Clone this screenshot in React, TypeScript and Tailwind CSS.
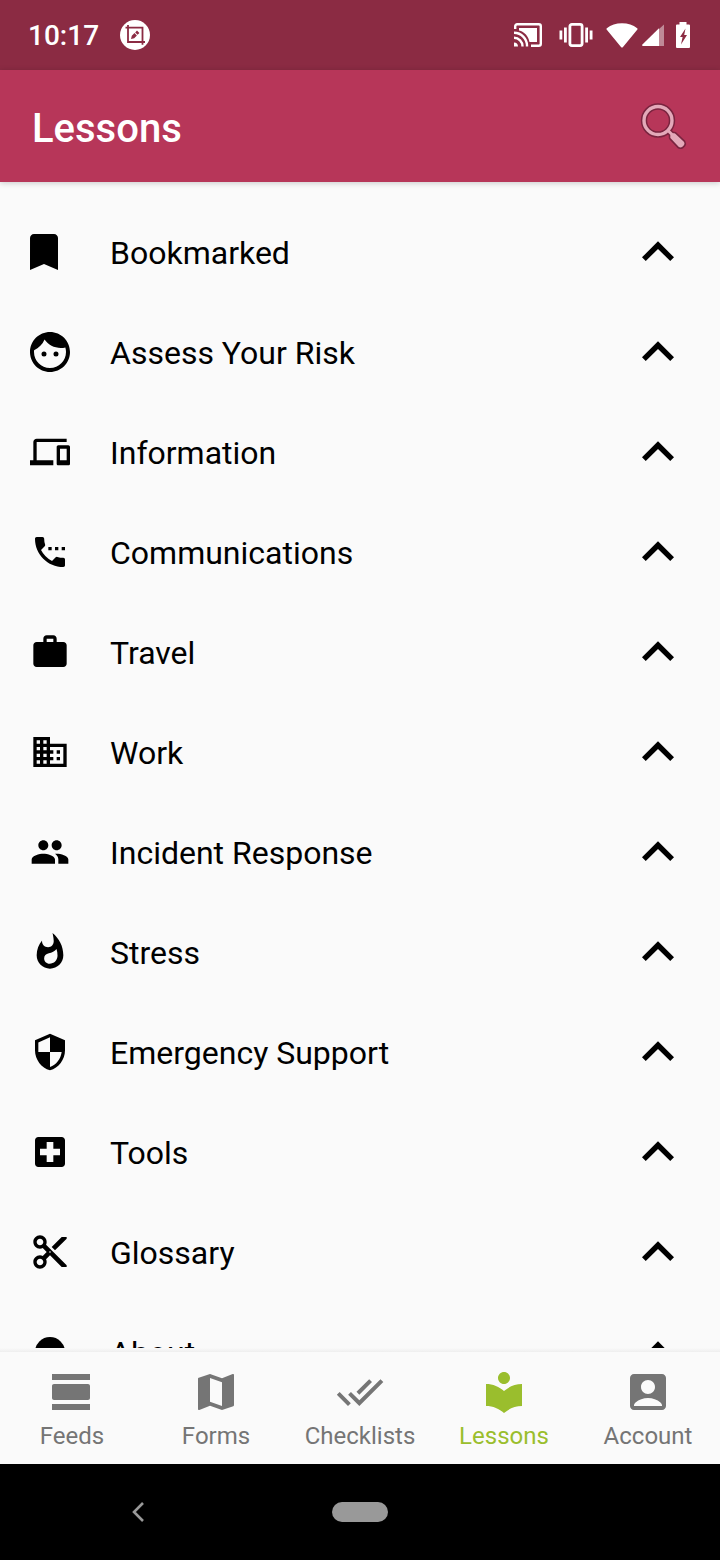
import type { ComponentType } from "react";
import {
  MdAccountBox,
  MdBusiness,
  MdContentCut,
  MdDevices,
  MdDoneAll,
  MdExpandLess,
  MdLocalHospital,
  MdLocalLibrary,
  MdMap,
  MdPeople,
  MdSecurity,
  MdSettingsPhone,
  MdViewDay,
  MdWhatshot,
  MdWork,
} from "react-icons/md";

type Icon = ComponentType<{ className?: string }>;

function BookmarkIcon({ className }: { className?: string }) {
  return (
    <svg viewBox="5 2 20 20" fill="currentColor" className={className} aria-hidden="true">
      <path d="M17 3H7c-1.1 0-1.99.9-1.99 2L5 21l7-3 7 3V5c0-1.1-.9-2-2-2z" />
    </svg>
  );
}

function FaceIcon({ className }: { className?: string }) {
  return (
    <svg viewBox="2 2 20 20" fill="currentColor" className={className} aria-hidden="true">
      <path d="M9 11.75a1.25 1.25 0 1 0 0 2.5 1.25 1.25 0 0 0 0-2.5zm6 0a1.25 1.25 0 1 0 0 2.5 1.25 1.25 0 0 0 0-2.5zM12 2C6.48 2 2 6.48 2 12s4.48 10 10 10 10-4.48 10-10S17.52 2 12 2zm0 18c-4.41 0-8-3.59-8-8 0-.29.02-.58.05-.86 2.36-1.05 4.23-2.98 5.21-5.37C11.07 8.33 14.05 10 17.42 10c.78 0 1.53-.09 2.25-.26.21.71.33 1.47.33 2.26 0 4.41-3.59 8-8 8z" />
    </svg>
  );
}

function DiscIcon({ className }: { className?: string }) {
  return (
    <svg viewBox="0 0 24 24" fill="currentColor" className={className} aria-hidden="true">
      <circle cx="12" cy="12" r="9" />
    </svg>
  );
}

function ScreenEditIcon() {
  return (
    <svg viewBox="0 0 30 30" className="size-[30px]" aria-hidden="true">
      <circle cx="15" cy="15" r="15" fill="#fff" />
      <path d="M5.500 7.700h17v17M8 5v17h17" fill="none" stroke="#8b2b43" strokeWidth="1.800" />
      <path d="M11 19l.8-3.200 2.700-2.700 2.400 2.400-2.700 2.700zM15.200 12.400l1.800-1.800 2.400 2.400-1.800 1.800z" fill="#8b2b43" />
    </svg>
  );
}

function CastIcon() {
  return (
    <svg viewBox="0 0 28 24" className="h-6 w-7" fill="none" stroke="#fff" aria-hidden="true">
      <path d="M1.200 6V3.200a2 2 0 0 1 2-2h21.600a2 2 0 0 1 2 2v17.600a2 2 0 0 1-2 2H17" strokeWidth="2.400" />
      <path d="M5 5h18v14H15.500C14.500 13.500 10.500 8.500 5 7.500z" fill="#fff" stroke="none" />
      <path d="M0 9.800A13 13 0 0 1 13 23.500M0 14.800a8.500 8.500 0 0 1 8.500 8.700" strokeWidth="2.400" />
      <path d="M0 19.500a4.200 4.200 0 0 1 4 4H0z" fill="#fff" stroke="none" />
    </svg>
  );
}

function VibrateIcon() {
  return (
    <svg viewBox="0 0 34 24" className="h-6 w-[34px]" aria-hidden="true">
      <path
        fill="#fff"
        d="M.5 7.500h2.800v9H.5zM5 4.500h2.800v15H5zM30.700 7.500h2.800v9h-2.800zM26.200 4.500H29v15h-2.800z"
      />
      <rect x="10.900" y="1.400" width="12.200" height="21.200" rx="2" fill="none" stroke="#fff" strokeWidth="2.800" />
    </svg>
  );
}

function WifiIcon() {
  return (
    <svg viewBox="0 0 32 25" className="h-[25px] w-8" fill="#fff" aria-hidden="true">
      <path d="M.8 5.200C5 2 10 .3 16 .3s11 1.700 15.200 4.900q.8.600.2 1.400L16.800 24.200q-.8.800-1.600 0L.6 6.600Q0 5.800.8 5.200z" />
    </svg>
  );
}

function SignalIcon() {
  return (
    <svg viewBox="0 0 22 22" className="size-[22px]" fill="#fff" aria-hidden="true">
      <path d="M22 .5V22H17V5z" opacity=".45" />
      <path d="M1 22q-1.400-.3-.6-1.400L17 4.200V22z" />
    </svg>
  );
}

function BatteryIcon() {
  return (
    <svg viewBox="0 0 14 26" className="h-[26px] w-3.5" aria-hidden="true">
      <path fill="#fff" d="M3.500 0h7v2.500H13a1 1 0 0 1 1 1V25a1 1 0 0 1-1 1H1a1 1 0 0 1-1-1V3.500a1 1 0 0 1 1-1h2.500z" />
      <path fill="#8b2b43" d="M9.500 6.500 4 15h2.600L5 22.500 11 13H8.200z" />
    </svg>
  );
}

function SearchIcon() {
  return (
    <svg viewBox="0 0 48 48" className="size-12" aria-hidden="true">
      <g fill="none" stroke="#79243f" strokeLinejoin="round">
        <circle cx="18" cy="18.500" r="14" strokeWidth="6.400" />
        <path d="M27 27.500l7 7" strokeWidth="6" />
        <path d="M34.500 32.500l8.500 8a2 2 0 0 1 0 2l-1.500 1.500a2 2 0 0 1-2 0l-8-8.500v-2l1-1z" fill="#79243f" strokeWidth="5.500" />
      </g>
      <g fill="none" stroke="#e3a9b9" strokeLinejoin="round">
        <circle cx="18" cy="18.500" r="14" strokeWidth="3.400" />
        <path d="M27.500 28l6 6" strokeWidth="3" />
        <path d="M34.500 32.500l8.500 8a2 2 0 0 1 0 2l-1.500 1.500a2 2 0 0 1-2 0l-8-8.500v-2l1-1z" fill="#e3a9b9" strokeWidth="2.400" />
      </g>
    </svg>
  );
}

const lessons: { label: string; icon: Icon }[] = [
  { label: "Bookmarked", icon: BookmarkIcon },
  { label: "Assess Your Risk", icon: FaceIcon },
  { label: "Information", icon: MdDevices },
  { label: "Communications", icon: MdSettingsPhone },
  { label: "Travel", icon: MdWork },
  { label: "Work", icon: MdBusiness },
  { label: "Incident Response", icon: MdPeople },
  { label: "Stress", icon: MdWhatshot },
  { label: "Emergency Support", icon: MdSecurity },
  { label: "Tools", icon: MdLocalHospital },
  { label: "Glossary", icon: MdContentCut },
  { label: "About", icon: DiscIcon },
];

const tabs: { label: string; icon: Icon; active?: boolean }[] = [
  { label: "Feeds", icon: MdViewDay },
  { label: "Forms", icon: MdMap },
  { label: "Checklists", icon: MdDoneAll },
  { label: "Lessons", icon: MdLocalLibrary, active: true },
  { label: "Account", icon: MdAccountBox },
];

function StatusBar() {
  return (
    <div className="flex h-[70px] shrink-0 items-center bg-[#8b2b43] pr-[30px] pl-7 text-white">
      <span className="pt-0.5 text-[28px] leading-8 font-medium">10:17</span>
      <span className="ml-[21px]">
        <ScreenEditIcon />
      </span>
      <div className="ml-auto flex items-center">
        <CastIcon />
        <span className="ml-[17px]">
          <VibrateIcon />
        </span>
        <span className="ml-[13px]">
          <WifiIcon />
        </span>
        <span className="ml-1">
          <SignalIcon />
        </span>
        <span className="ml-3">
          <BatteryIcon />
        </span>
      </div>
    </div>
  );
}

export default function App() {
  return (
    <div className="flex h-screen flex-col bg-[#fafafa] font-['Roboto',sans-serif]">
      <StatusBar />
      <header className="relative z-10 flex h-28 shrink-0 items-center justify-between bg-[#b73659] px-8 shadow-[0_1px_6px_rgba(0,0,0,0.2)]">
        <h1 className="pt-1.5 text-[40px] leading-12 font-medium text-white">Lessons</h1>
        <button type="button" aria-label="Search">
          <SearchIcon />
        </button>
      </header>

      <main className="min-h-0 flex-1 overflow-y-auto pt-5 [scrollbar-width:none]">
        <ul>
          {lessons.map(({ label, icon: RowIcon }) => (
            <li key={label}>
              <button type="button" className="flex h-25 w-full items-center px-[30px] text-left text-black">
                <RowIcon className="size-10 shrink-0" />
                <span className="ml-10 flex-1 pt-0.5 text-[32px] leading-10">{label}</span>
                <MdExpandLess className="size-16 shrink-0" />
              </button>
            </li>
          ))}
        </ul>
      </main>

      <div className="h-1 shrink-0 bg-linear-to-b from-[#fafafa] to-[#eeeeee]" />
      <nav className="flex h-28 shrink-0 bg-[#fafafa]">
        {tabs.map(({ label, icon: TabIcon, active }) => (
          <a
            key={label}
            href="#"
            aria-current={active ? "page" : undefined}
            className={
              active
                ? "flex flex-1 basis-0 flex-col items-center pt-4 text-[#9abe2d]"
                : "flex flex-1 basis-0 flex-col items-center pt-4 text-[#757575]"
            }
          >
            <TabIcon className="size-12" />
            <span className="mt-1 text-2xl leading-8">{label}</span>
          </a>
        ))}
      </nav>

      <div className="grid h-24 shrink-0 grid-cols-5 items-center bg-black">
        <button type="button" aria-label="Back" className="col-span-2 pl-[132px]">
          <svg viewBox="0 0 12 20" className="h-5 w-3" fill="none" stroke="#999" strokeWidth="2.600" aria-hidden="true">
            <path d="M11 1 2 10l9 9" />
          </svg>
        </button>
        <button type="button" aria-label="Home" className="h-5 w-14 justify-self-center rounded-full bg-[#999]" />
      </div>
    </div>
  );
}
